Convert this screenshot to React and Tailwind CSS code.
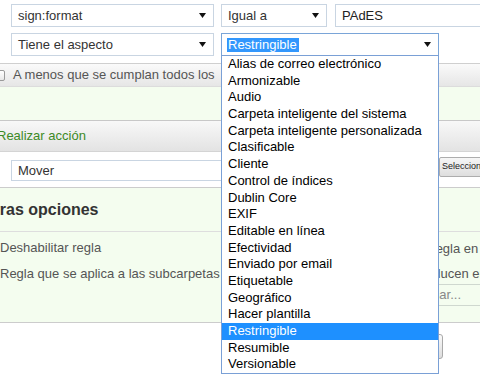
import React from "react";

const Arrow = () => (
  <svg width="7" height="5" viewBox="0 0 7 5" className="shrink-0">
    <path d="M0 0H7L3.5 5Z" fill="#111" />
  </svg>
);

const items = [
  "Alias de correo electrónico",
  "Armonizable",
  "Audio",
  "Carpeta inteligente del sistema",
  "Carpeta inteligente personalizada",
  "Clasificable",
  "Cliente",
  "Control de índices",
  "Dublin Core",
  "EXIF",
  "Editable en línea",
  "Efectividad",
  "Enviado por email",
  "Etiquetable",
  "Geográfico",
  "Hacer plantilla",
  "Restringible",
  "Resumible",
  "Versionable",
];

function Select({ className = "", children }) {
  return (
    <div
      className={`flex items-center justify-between bg-white border border-[#c9d5e2] pl-[6px] pr-[7px] text-[13px] text-[#333] shrink-0 ${className}`}
    >
      <span className="whitespace-nowrap">{children}</span>
      <Arrow />
    </div>
  );
}

export default function App() {
  return (
    <div
      className="relative w-[480px] h-[387px] overflow-hidden bg-white text-[13px]"
      style={{ fontFamily: '"Liberation Sans", Arial, sans-serif' }}
    >
      {/* Top condition rows */}
      <div className="flex flex-col gap-[6px] pt-[4px] pl-[11px]">
        <div className="flex gap-[7px] h-[23px]">
          <Select className="w-[203px]">sign:format</Select>
          <Select className="w-[106px]">Igual a</Select>
          <div className="ml-[1px] w-[170px] shrink-0 flex items-center bg-white border border-[#c9d5e2] pl-[6px] text-[13px] text-[#222]">
            PAdES
          </div>
        </div>
        <div className="flex gap-[7px] h-[23px]">
          <Select className="w-[203px]">Tiene el aspecto</Select>
          <div className="w-[218px] shrink-0 flex items-center justify-between bg-white border border-[#7aa5d8] pl-[5px] pr-[7px]">
            <span className="bg-[#3297fd] text-white leading-[14px] pl-[1px] pr-[2px] whitespace-nowrap">
              Restringible
            </span>
            <Arrow />
          </div>
        </div>
      </div>

      {/* Checkbox bar */}
      <div className="mt-[7px] h-[23px] flex items-center border-t border-[#cfcfcf] bg-gradient-to-b from-[#fafafa] to-[#e6e6e6] text-[#555]">
        <div className="ml-[-6px] w-[11px] h-[11px] border border-[#9a9a9a] rounded-[2px] bg-gradient-to-b from-white to-[#e8e8e8] shrink-0" />
        <span className="ml-[8px] whitespace-nowrap">A menos que se cumplan todos los</span>
      </div>

      {/* Green spacer */}
      <div className="h-[34px] bg-[#f4fdef] border-t border-[#dcdcdc]" />

      {/* Realizar acción bar */}
      <div className="h-[32px] flex items-center border-t border-[#c8c8c8] border-b border-b-[#d4d4d4] bg-gradient-to-b from-[#f8f8f8] to-[#e3e3e3]">
        <span className="ml-[-3px] text-[#3d8a26] whitespace-nowrap">Realizar acción</span>
      </div>

      {/* Action row */}
      <div className="h-[35px] flex items-start pl-[11px] bg-white">
        <Select className="mt-[8px] h-[21px] w-[420px]">Mover</Select>
        <div className="ml-[8px] mt-[5px] h-[20px] w-[80px] shrink-0 flex items-center border border-[#adadad] rounded-[2px] bg-gradient-to-b from-[#f6f6f6] to-[#dedede] pl-[2px] text-[9px] text-[#222] whitespace-nowrap">
          Seleccionar destino
        </div>
      </div>

      {/* Otras opciones */}
      <div className="border-t border-[#cccccc] border-b bg-[#f4fdef] h-[136px]">
        <div className="h-[44px] flex items-center border-b border-[#dedede]">
          <span className="ml-[-18px] text-[16px] font-bold text-[#333] whitespace-nowrap">Otras opciones</span>
        </div>
        <div className="flex">
          <div className="w-[384px] shrink-0 flex flex-col gap-[6px] pt-[6px] text-[#555]">
            <span className="leading-[20px] whitespace-nowrap">Deshabilitar regla</span>
            <span className="leading-[20px] whitespace-nowrap">Regla que se aplica a las subcarpetas</span>
          </div>
          <div className="flex flex-col pt-[7px] text-[#555]">
            <span className="ml-[-4px] leading-[20px] whitespace-nowrap">Ejecutar regla en segundo plano</span>
            <span className="mt-[5px] pl-[11px] leading-[20px] whitespace-nowrap">Se producen en subcarpetas</span>
            <div className="ml-[-2px] h-[22px] w-[120px] flex items-center border-y border-[#cfd8cf] bg-[#f4fdef] pl-[1px] text-[#888] whitespace-nowrap">
              Seleccionar...
            </div>
          </div>
        </div>
      </div>

      {/* Bottom buttons */}
      <div className="pt-[11px] pl-[360px]">
        <div className="w-[83px] h-[25px] rounded-[3px] border border-[#a9a9a9] bg-gradient-to-b from-[#fafafa] to-[#dddddd] flex items-center justify-center text-[#333]">
          Cancelar
        </div>
      </div>

      {/* Open dropdown list */}
      <div className="absolute left-[221px] top-[55px] w-[218px] bg-white border border-[#7aa0d6] text-[13px] text-black">
        {items.map((it) => (
          <div
            key={it}
            className={`h-[16.69px] leading-[16.69px] pl-[6px] whitespace-nowrap ${
              it === "Restringible" ? "bg-[#1e90ff] text-white" : ""
            }`}
          >
            {it}
          </div>
        ))}
      </div>
    </div>
  );
}
